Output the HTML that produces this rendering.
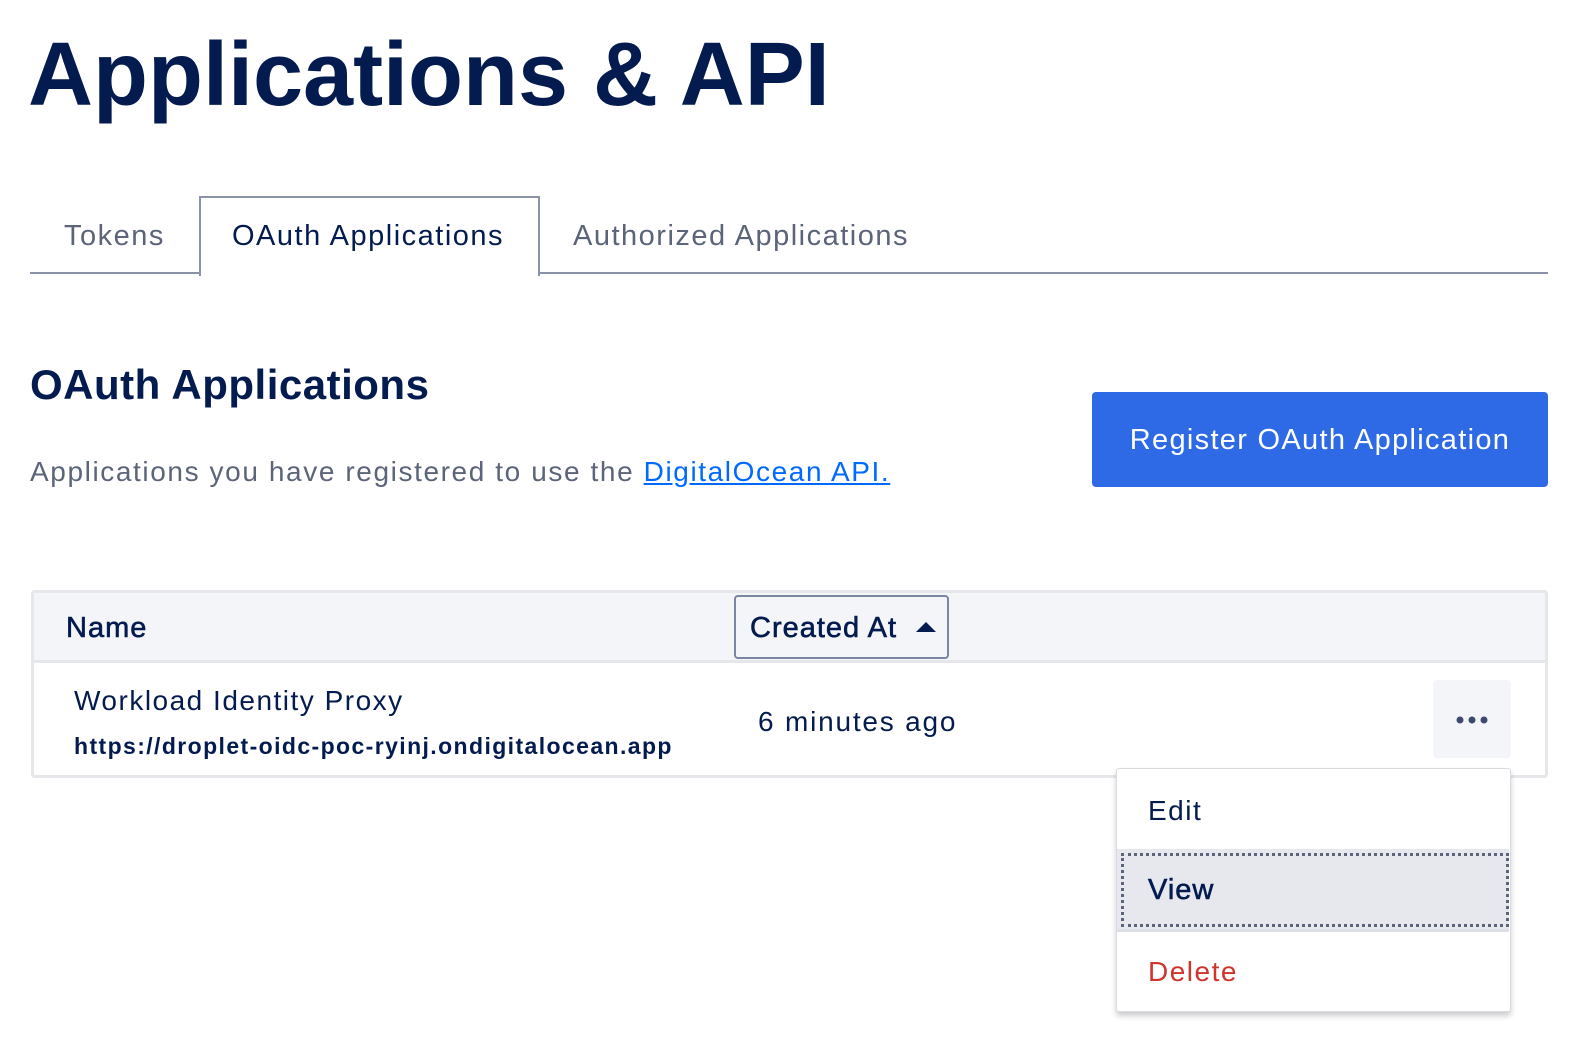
<!DOCTYPE html>
<html><head><style>
body{margin:0;width:1576px;height:1044px;background:#fff;font-family:"Liberation Sans",sans-serif;color:#031b4e;position:relative;overflow:hidden;letter-spacing:1.5px}
.a{position:absolute;white-space:nowrap}
</style></head><body>
<div class="a" style="left:28px;top:20px;font-size:90px;font-weight:bold;letter-spacing:0px;line-height:110px">Applications &amp; API</div>

<div class="a" style="left:30px;top:272px;width:1518px;height:2px;background:#8a93a8"></div>
<div class="a" style="left:199px;top:196px;width:337px;height:78px;border:2px solid #8a93a8;border-bottom:none;background:#fff"></div>
<div class="a" style="left:64px;top:220px;font-size:29px;color:#5b6478">Tokens</div>
<div class="a" style="left:232px;top:220px;font-size:29px;color:#031b4e">OAuth Applications</div>
<div class="a" style="left:573px;top:220px;font-size:29px;color:#5b6478">Authorized Applications</div>

<div class="a" style="left:30px;top:361px;font-size:42px;font-weight:bold;letter-spacing:0.5px">OAuth Applications</div>
<div class="a" style="left:30px;top:456px;font-size:28px;color:#5b6478;letter-spacing:1.6px">Applications you have registered to use the <span style="color:#0069ff;text-decoration:underline">DigitalOcean API.</span></div>
<div class="a" style="left:1092px;top:392px;width:456px;height:95px;background:#2e6ae6;border-radius:4px;color:#fff;font-size:29px;line-height:97px;text-align:center;letter-spacing:1.3px">Register OAuth Application</div>

<div class="a" style="left:31px;top:590px;width:1511px;height:182px;border:3px solid #e5e7eb;border-radius:4px"></div>
<div class="a" style="left:34px;top:593px;width:1511px;height:67px;background:#f3f5f9;border-bottom:3px solid #e5e7eb"></div>
<div class="a" style="left:66px;top:612px;font-size:29px;letter-spacing:1px;-webkit-text-stroke:0.6px #031b4e">Name</div>
<div class="a" style="left:734px;top:595px;width:211px;height:60px;border:2px solid #7b86a0;border-radius:4px;background:#f3f5f9"></div>
<div class="a" style="left:750px;top:612px;font-size:29px;letter-spacing:1px;-webkit-text-stroke:0.6px #031b4e">Created At</div>
<svg class="a" style="left:916px;top:621px" width="20" height="12"><path d="M0 11L10 1L20 11Z" fill="#031b4e"/></svg>

<div class="a" style="left:74px;top:685px;font-size:28px">Workload Identity Proxy</div>
<div class="a" style="left:74px;top:733px;font-size:23px;font-weight:bold;letter-spacing:1.4px">https://droplet-oidc-poc-ryinj.ondigitalocean.app</div>
<div class="a" style="left:758px;top:706px;font-size:28px;letter-spacing:1.8px">6 minutes ago</div>
<div class="a" style="left:1433px;top:680px;width:78px;height:78px;background:#f3f5f9;border-radius:4px"></div>
<svg class="a" style="left:1455px;top:714px" width="36" height="12"><circle cx="5" cy="6" r="3.5" fill="#3c4a6b"/><circle cx="17" cy="6" r="3.5" fill="#3c4a6b"/><circle cx="29" cy="6" r="3.5" fill="#3c4a6b"/></svg>

<div class="a" style="left:1116px;top:768px;width:393px;height:242px;background:#fff;border:1px solid #d8dbe2;border-radius:3px;box-shadow:0 4px 6px rgba(0,0,0,.2)"></div>
<div class="a" style="left:1148px;top:795px;font-size:28px">Edit</div>
<div class="a" style="left:1117px;top:849px;width:392px;height:80px;background:#e6e8ed;border-bottom:3px solid #dcdfe5"></div>
<div class="a" style="left:1121px;top:853px;width:382px;height:68px;border:3px dotted #5b6478"></div>
<div class="a" style="left:1148px;top:874px;font-size:29px;letter-spacing:1px;-webkit-text-stroke:0.6px #031b4e">View</div>
<div class="a" style="left:1148px;top:956px;font-size:28px;color:#d0342c">Delete</div>
</body></html>
